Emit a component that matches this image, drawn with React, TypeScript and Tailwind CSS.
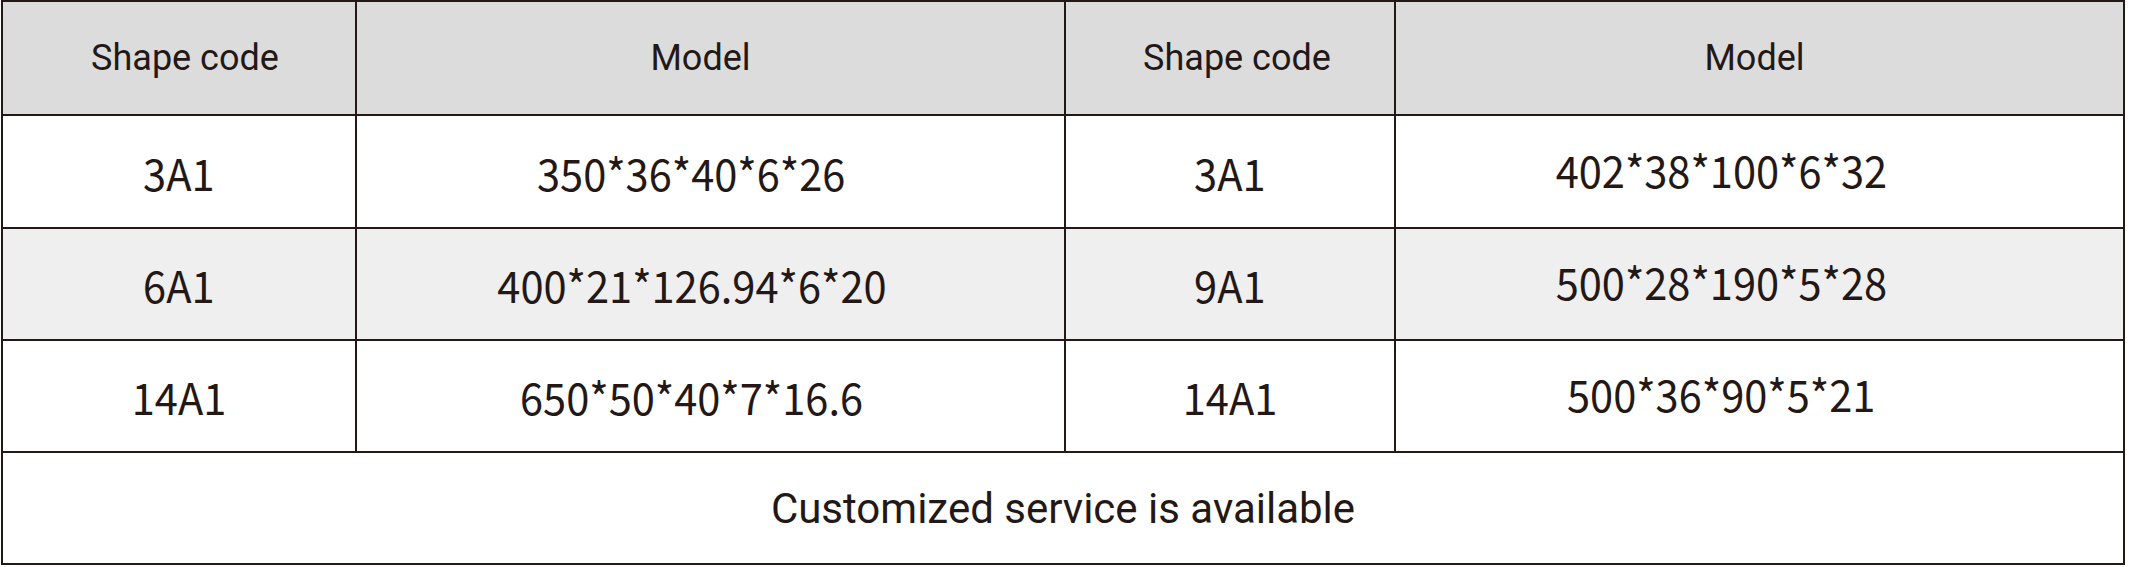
const ROWS = [
  { bg: 'bg-white', a: '3A1', b: '350*36*40*6*26', c: '3A1', d: '402*38*100*6*32', h: 'h-[111px]' },
  { bg: 'bg-[#efefef]', a: '6A1', b: '400*21*126.94*6*20', c: '9A1', d: '500*28*190*5*28', h: 'h-[110px]' },
  { bg: 'bg-white', a: '14A1', b: '650*50*40*7*16.6', c: '14A1', d: '500*36*90*5*21', h: 'h-[110px]' },
];

const dataFont = "font-['Noto_Sans_CJK_SC','Noto_Sans',sans-serif] text-[44px]";
const headFont = "font-['Roboto','Noto_Sans',sans-serif] text-[36px]";

// the numbers in the source are set a bit narrower than Noto Sans CJK
function Num({ children }: { children: string }) {
  return <span className="inline-block scale-x-[0.945]">{children}</span>;
}

export default function App() {
  return (
    <div className="min-h-screen bg-white pl-[1px] text-[#231815]">
      <div className="grid w-[2124px] grid-cols-[352px_707px_328px_727px] gap-[2px] bg-[#231815] p-[2px]">
        {/* header */}
        <div className={`flex h-[112px] items-center justify-center bg-[#dcdcdc] pl-[12px] ${headFont}`}>Shape code</div>
        <div className={`flex h-[112px] items-center justify-center bg-[#dcdcdc] pr-[20px] ${headFont}`}>Model</div>
        <div className={`flex h-[112px] items-center justify-center bg-[#dcdcdc] pl-[14px] ${headFont}`}>Shape code</div>
        <div className={`flex h-[112px] items-center justify-center bg-[#dcdcdc] pr-[10px] ${headFont}`}>Model</div>

        {ROWS.map((r) => (
          <div key={r.b} className="contents">
            <div className={`flex items-center justify-center ${r.h} ${r.bg} ${dataFont}`}>
              <Num>{r.a}</Num>
            </div>
            <div className={`flex items-center justify-center pr-[38px] ${r.h} ${r.bg} ${dataFont}`}>
              <Num>{r.b}</Num>
            </div>
            <div className={`flex items-center justify-center ${r.h} ${r.bg} ${dataFont}`}>
              <Num>{r.c}</Num>
            </div>
            <div className={`flex items-center justify-center pr-[76px] pb-[6px] ${r.h} ${r.bg} ${dataFont}`}>
              <Num>{r.d}</Num>
            </div>
          </div>
        ))}

        {/* footer */}
        <div className="col-span-4 flex h-[110px] items-center justify-center bg-white font-['Roboto','Noto_Sans',sans-serif] text-[42px]">
          Customized service is available
        </div>
      </div>
    </div>
  );
}
